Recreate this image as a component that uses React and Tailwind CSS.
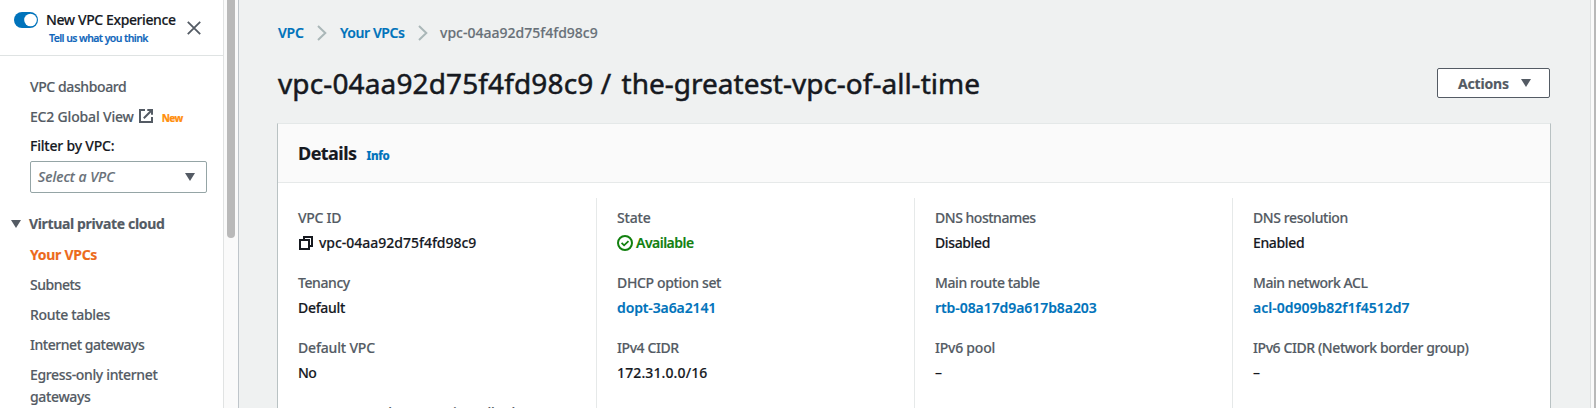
import React from 'react';

function Caret({ className = '' }) {
  return (
    <svg viewBox="0 0 10 8" className={`h-2 w-2.5 shrink-0 ${className}`} fill="currentColor">
      <path d="M0 0h10L5 8z" />
    </svg>
  );
}

function Toggle() {
  return (
    <svg viewBox="0 0 24 16" className="mt-3 h-4 w-6 shrink-0">
      <rect width="24" height="16" rx="8" fill="#0073bb" />
      <circle cx="16.5" cy="8" r="6.3" fill="#fff" />
    </svg>
  );
}

function Close() {
  return (
    <svg viewBox="0 0 14 14" className="mt-[21px] h-3.5 w-3.5 shrink-0" fill="none" stroke="#545b64" strokeWidth="1.8">
      <path d="M0.8 0.8l12.4 12.4M13.2 0.8L0.8 13.2" />
    </svg>
  );
}

function External() {
  return (
    <svg viewBox="0 0 16 16" className="h-4 w-4 shrink-0" fill="none" stroke="#545b64" strokeWidth="2">
      <path d="M7 2H2v12h12V9" />
      <path d="M9.3 2H14v4.7M14 2L5.8 10.2" />
    </svg>
  );
}

function Copy() {
  return (
    <svg viewBox="0 0 16 16" className="h-4 w-4 shrink-0" fill="none" stroke="#16191f" strokeWidth="2">
      <path d="M2 5h9v9H2z" />
      <path d="M6 5V2h8v9h-3" />
    </svg>
  );
}

function Check() {
  return (
    <svg viewBox="0 0 16 16" className="h-4 w-4 shrink-0" fill="none" stroke="#12800f" strokeWidth="2">
      <circle cx="8" cy="8" r="7" />
      <path d="M4.6 7.8l2.5 2.5 4.4-4.2" strokeWidth="1.8" />
    </svg>
  );
}

function Chevron() {
  return (
    <svg viewBox="0 0 10 16" className="h-4 w-2.5 shrink-0" fill="none" stroke="#aab7b8" strokeWidth="2">
      <path d="M1 1l7.3 7L1 15" />
    </svg>
  );
}

const navItems = [
  { text: 'Subnets', cls: 'tracking-[-0.5px]' },
  { text: 'Route tables', cls: 'tracking-[-0.33px]' },
  { text: 'Internet gateways', cls: 'tracking-[-0.46px]' },
  { text: 'Egress-only internet gateways', cls: 'tracking-[-0.35px]' },
];

const columns = [
  [
    { label: 'VPC ID', lc: 'tracking-[-0.3px]', value: 'vpc-04aa92d75f4fd98c9', vc: 'tracking-[-0.02px]', icon: <Copy />, gap: 'gap-[5px]' },
    { label: 'Tenancy', lc: 'tracking-[-0.42px]', value: 'Default', vc: 'tracking-[-0.31px]' },
    { label: 'Default VPC', lc: 'tracking-[-0.18px]', value: 'No', vc: 'tracking-[-0.5px]' },
    { label: 'Route 53 Resolver DNS Firewall rule groups', lc: 'tracking-[-0.38px]' },
  ],
  [
    { label: 'State', lc: 'tracking-[-0.2px]', value: 'Available', vc: 'tracking-[-0.52px] font-semibold text-[#12800f]', icon: <Check />, gap: 'gap-[3px]' },
    { label: 'DHCP option set', lc: 'tracking-[-0.35px]', value: 'dopt-3a6a2141', vc: 'tracking-[-0.12px] font-semibold text-[#0073bb]' },
    { label: 'IPv4 CIDR', lc: 'tracking-[-0.42px]', value: '172.31.0.0/16', vc: 'tracking-[0.12px]' },
    { label: 'Owner ID', lc: 'tracking-[-0.4px]' },
  ],
  [
    { label: 'DNS hostnames', lc: 'tracking-[-0.48px]', value: 'Disabled', vc: 'tracking-[-0.38px]' },
    { label: 'Main route table', lc: 'tracking-[-0.39px]', value: 'rtb-08a17d9a617b8a203', vc: 'tracking-[-0.07px] font-semibold text-[#0073bb]' },
    { label: 'IPv6 pool', lc: 'tracking-[-0.23px]', value: '–', vc: '' },
  ],
  [
    { label: 'DNS resolution', lc: 'tracking-[-0.4px]', value: 'Enabled', vc: 'tracking-[-0.36px]' },
    { label: 'Main network ACL', lc: 'tracking-[-0.45px]', value: 'acl-0d909b82f1f4512d7', vc: 'tracking-[0px] font-semibold text-[#0073bb]' },
    { label: 'IPv6 CIDR (Network border group)', lc: 'tracking-[-0.42px]', value: '–', vc: '' },
  ],
];

function Sidebar() {
  return (
    <aside className="flex h-full w-[239px] shrink-0 border-r border-[#bfc5ca]">
      <div className="h-full w-[223px] shrink-0 overflow-hidden bg-white">
        <div className="flex h-14 border-b border-[#dfe3e3] pl-3.5">
          <Toggle />
          <div className="ml-2 w-[141px] pt-[9px]">
            <div className="whitespace-nowrap leading-[22px] tracking-[-0.4px] text-[#16191f]">New VPC Experience</div>
            <div className="ml-[3px] whitespace-nowrap text-[10.5px] font-semibold leading-[14px] tracking-[-0.58px] text-[#1166bb]">
              Tell us what you think
            </div>
          </div>
          <Close />
        </div>
        <div className="pl-[30px] pt-5 text-[#545b64]">
          <div className="leading-[22px] tracking-[-0.4px]">VPC dashboard</div>
          <div className="mt-[7px] flex h-[22px] items-center">
            <span className="tracking-[-0.18px]">EC2 Global View</span>
            <span className="ml-1 flex"><External /></span>
            <span className="ml-2 mt-1 text-[10px] font-extrabold tracking-[-0.6px] text-[#ff9010]">New</span>
          </div>
          <div className="mt-2 leading-[22px] tracking-[-0.2px] text-[#16191f]">Filter by VPC:</div>
          <div className="mt-1 flex h-8 w-[177px] items-center justify-between rounded-[2px] border border-[#95a5a6] pl-[7px] pr-[11px]">
            <span className="italic leading-[22px] text-[#687078]">Select a VPC</span>
            <Caret />
          </div>
          <div className="-ml-[19px] mt-5 flex items-center gap-2">
            <Caret />
            <span className="font-bold leading-[22px] tracking-[-0.35px]">Virtual private cloud</span>
          </div>
          <ul className="mt-[9px] flex w-[140px] flex-col gap-2 leading-[22px]">
            <li className="font-bold tracking-[-0.28px] text-[#ec6a1c]">Your VPCs</li>
            {navItems.map((n) => (
              <li key={n.text} className={n.cls}>{n.text}</li>
            ))}
          </ul>
        </div>
      </div>
      <div className="flex-1 border-l border-[#e1e3e3] bg-[#fafafa] pl-[3px]">
        <div className="h-[238px] w-2 rounded-b-full bg-[#b9b9b9]" />
      </div>
    </aside>
  );
}

function Field({ f }) {
  return (
    <div className="h-[65px]">
      <div className={`whitespace-nowrap leading-[22px] text-[#545b64] ${f.lc}`}>{f.label}</div>
      {f.value && (
        <div className={`mt-[3px] flex h-[22px] items-center ${f.gap || ''}`}>
          {f.icon}
          <span className={`leading-[22px] ${f.vc}`}>{f.value}</span>
        </div>
      )}
    </div>
  );
}

export default function App() {
  return (
    <div className="flex h-[408px] w-[1596px] overflow-hidden bg-[#eff1f1] font-['Noto_Sans',sans-serif] text-[14px] font-medium text-[#16191f] [-webkit-text-stroke:0.15px]">
      <Sidebar />
      <main className="min-w-0 flex-1 pl-[39px] pr-10 pt-[22px]">
        <nav className="flex h-[22px] items-center leading-[22px]">
          <a className="w-[26px] font-semibold tracking-[-0.22px] text-[#0073bb]">VPC</a>
          <span className="ml-[13px] flex"><Chevron /></span>
          <a className="ml-[13px] w-[66px] whitespace-nowrap font-semibold tracking-[-0.43px] text-[#0073bb]">Your VPCs</a>
          <span className="ml-3 flex"><Chevron /></span>
          <span className="ml-[12px] text-[#687078]">vpc-04aa92d75f4fd98c9</span>
        </nav>
        <div className="mt-[21px] flex h-9 items-start justify-between">
          <h1 className="text-[28px] font-normal leading-9 [-webkit-text-stroke:0.5px]">
            <span className="tracking-[0.13px]">vpc-04aa92d75f4fd98c9 /</span>
            <span className="ml-[3px] tracking-[0px]"> the-greatest-vpc-of-all-time</span>
          </h1>
          <button className="mt-[3px] flex h-[30px] w-[113px] items-center rounded-[2px] border border-[#545b64] bg-white pl-5 font-bold tracking-[-0.17px] text-[#545b64]">
            Actions
            <Caret className="ml-3" />
          </button>
        </div>
        <section className="-ml-px -mr-px mt-[22px] h-[400px] w-[1274px] border border-[#b9c2c3] border-t-[#e4e8e8] bg-white">
          <header className="flex h-[59px] items-baseline gap-2.5 border-b border-[#e6e9e9] bg-[#fafafa] pl-5 pt-[17px]">
            <h2 className="text-[18px] font-bold leading-6 tracking-[-0.54px]">Details</h2>
            <a className="text-[11.5px] font-extrabold tracking-[-0.3px] text-[#0073bb]">Info</a>
          </header>
          <div className="mt-[15px] grid grid-cols-4">
            {columns.map((col, i) => (
              <div key={i} className={i === 0 ? 'h-[300px] pl-5 pt-[9px]' : 'h-[300px] border-l border-[#e6e9e9] pl-5 pt-[9px]'}>
                {col.map((f) => (
                  <Field key={f.label} f={f} />
                ))}
              </div>
            ))}
          </div>
        </section>
      </main>
      <div className="flex w-1.5 shrink-0 border-l border-[#dcdfdf] bg-[#fafafa] pl-[3px]">
        <div className="flex-1 bg-[#b9b9b9]" />
      </div>
    </div>
  );
}
